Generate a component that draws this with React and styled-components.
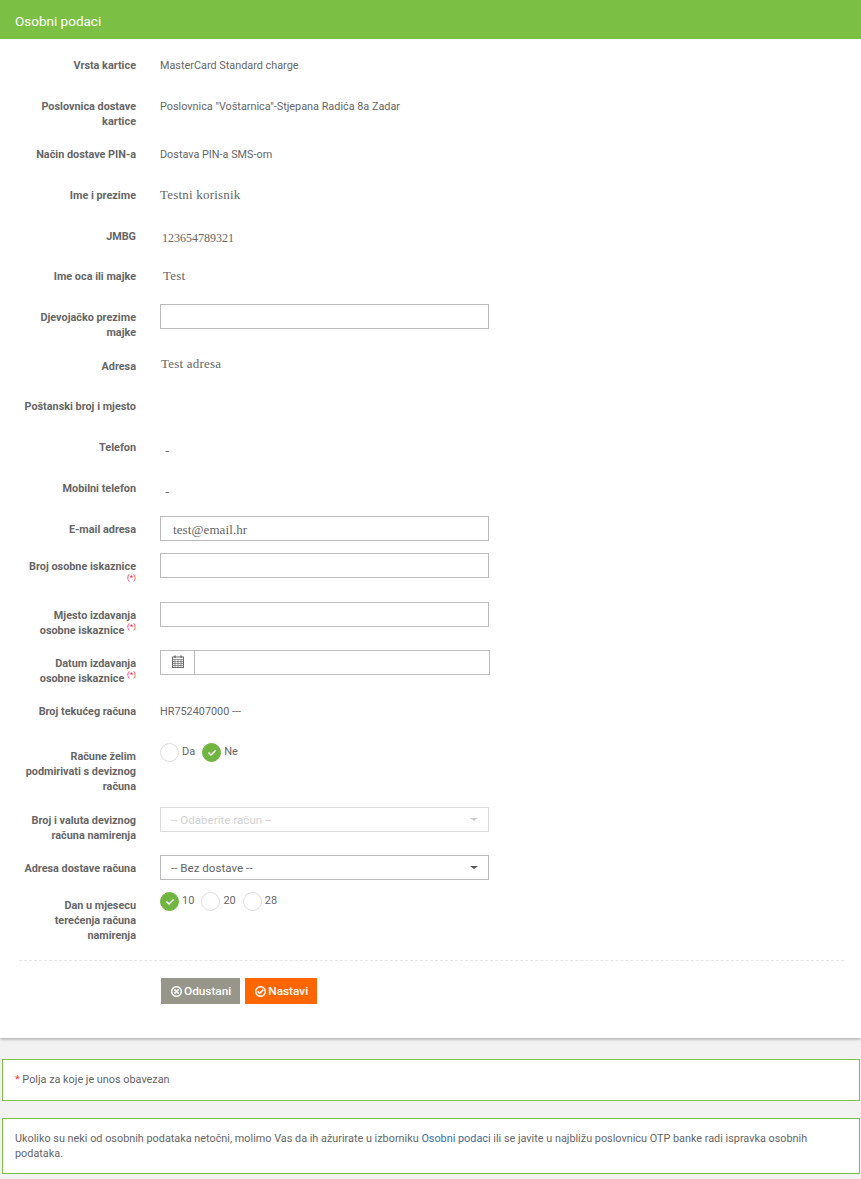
import React from 'react';
import styled, { createGlobalStyle } from 'styled-components';
import { FaCheck, FaRegCheckCircle, FaRegTimesCircle } from 'react-icons/fa';

const GlobalStyle = createGlobalStyle`
  html, body {
    margin: 0;
    padding: 0;
    background: #f2f2f2;
  }
  body {
    font-family: Roboto, "Liberation Sans", sans-serif;
    font-size: 11px;
    color: #666;
  }
`;

const CalendarIcon = () => (
  <svg width="12" height="13" viewBox="0 0 12 13" fill="none" stroke="#6b6b6b" strokeWidth="1">
    <rect x="0.5" y="2" width="11" height="10.5" />
    <path d="M0.5 4.5h11M0.5 6.5h11M0.5 8.5h11M0.5 10.5h11M3 4.5v8M6 4.5v8M9 4.5v8" strokeWidth="0.7" />
    <path d="M3 0.5v2.5M9 0.5v2.5" strokeWidth="1.5" />
  </svg>
);

const Required = () => <Mark>(*)</Mark>;

const App = () => (
  <>
    <GlobalStyle />
    <Panel>
      <Header>Osobni podaci</Header>
      <Body>
        <Row $height={41}>
          <Label>Vrsta kartice</Label>
          <Value>MasterCard Standard charge</Value>
        </Row>
        <Row $height={48}>
          <Label>Poslovnica dostave kartice</Label>
          <Value>Poslovnica "Voštarnica"-Stjepana Radića 8a Zadar</Value>
        </Row>
        <Row $height={41}>
          <Label>Način dostave PIN-a</Label>
          <Value>Dostava PIN-a SMS-om</Value>
        </Row>
        <Row $height={41}>
          <Label>Ime i prezime</Label>
          <SerifValue $top={-1}>Testni korisnik</SerifValue>
        </Row>
        <Row $height={40}>
          <Label>JMBG</Label>
          <SerifValue $left={2} $top={2} $size={12}>123654789321</SerifValue>
        </Row>
        <Row $height={41}>
          <Label>Ime oca ili majke</Label>
          <SerifValue $left={3} $top={-1}>Test</SerifValue>
        </Row>
        <Row $height={49}>
          <Label>Djevojačko prezime majke</Label>
          <Input />
        </Row>
        <Row $height={40}>
          <Label>Adresa</Label>
          <SerifValue $left={1} $top={-3}>Test adresa</SerifValue>
        </Row>
        <Row $height={41}>
          <Label>Poštanski broj i mjesto</Label>
          <div />
        </Row>
        <Row $height={41}>
          <Label>Telefon</Label>
          <SerifValue $left={5} $top={3}>-</SerifValue>
        </Row>
        <Row $height={41}>
          <Label>Mobilni telefon</Label>
          <SerifValue $left={5} $top={3}>-</SerifValue>
        </Row>
        <Row $height={37}>
          <Label>E-mail adresa</Label>
          <Input defaultValue="test@email.hr" />
        </Row>
        <Row $height={49}>
          <Label>Broj osobne iskaznice <Required /></Label>
          <Input />
        </Row>
        <Row $height={48}>
          <Label>Mjesto izdavanja osobne iskaznice <Required /></Label>
          <Input />
        </Row>
        <Row $height={48}>
          <Label>Datum izdavanja osobne iskaznice <Required /></Label>
          <DateField>
            <DateAddon><CalendarIcon /></DateAddon>
            <DateInput />
          </DateField>
        </Row>
        <Row $height={45}>
          <Label>Broj tekućeg računa</Label>
          <Value>HR752407000 ---</Value>
        </Row>
        <Row $height={64}>
          <Label>Račune želim podmirivati s deviznog računa</Label>
          <RadioGroup>
            <RadioItem><Radio /><RadioText>Da</RadioText></RadioItem>
            <RadioItem><Radio $checked><FaCheck /></Radio><RadioText>Ne</RadioText></RadioItem>
          </RadioGroup>
        </Row>
        <Row $height={48}>
          <Label>Broj i valuta deviznog računa namirenja</Label>
          <Select $disabled>-- Odaberite račun --<Caret $disabled /></Select>
        </Row>
        <Row $height={37}>
          <Label>Adresa dostave računa</Label>
          <Select>-- Bez dostave --<Caret /></Select>
        </Row>
        <Row $height={68}>
          <Label>Dan u mjesecu terećenja računa namirenja</Label>
          <RadioGroup>
            <RadioItem><Radio $checked><FaCheck /></Radio><RadioText>10</RadioText></RadioItem>
            <RadioItem><Radio /><RadioText>20</RadioText></RadioItem>
            <RadioItem><Radio /><RadioText>28</RadioText></RadioItem>
          </RadioGroup>
        </Row>
        <Actions>
          <Button $bg="#96968a"><FaRegTimesCircle />Odustani</Button>
          <Button $bg="#ff6600"><FaRegCheckCircle />Nastavi</Button>
        </Actions>
      </Body>
    </Panel>
    <Notes>
      <Note $height={42}><Star>*</Star> Polja za koje je unos obavezan</Note>
      <Note $height={56}>
        Ukoliko su neki od osobnih podataka netočni, molimo Vas da ih ažurirate u izborniku{' '}
        <NoteLink href="#">Osobni podaci</NoteLink> ili se javite u najbližu poslovnicu OTP banke radi ispravka osobnih podataka.
      </Note>
    </Notes>
  </>
);

export default App;

const Panel = styled.div`
  background: #fff;
  height: 1038px;
  box-shadow: 0 1px 3px rgba(0, 0, 0, 0.35);
`;

const Header = styled.div`
  height: 39px;
  padding-left: 15px;
  background: #7bbf45;
  color: #fff;
  font-size: 13.5px;
  font-weight: 400;
  line-height: 43px;
`;

const Body = styled.div`
  padding: 13px 17px 0 19px;
`;

const Row = styled.div`
  display: grid;
  grid-template-columns: 117px 329px;
  column-gap: 24px;
  height: ${(p) => p.$height}px;
  align-items: start;
`;

const Label = styled.div`
  padding-top: 6px;
  color: #666;
  font-size: 10.85px;
  font-weight: 700;
  line-height: 15px;
  text-align: right;
`;

const Mark = styled.sup`
  color: #f0203c;
  font-size: 8px;
  font-weight: 400;
  line-height: 0;
`;

const Value = styled.div`
  padding-top: 6px;
  color: #666;
  font-size: 10.85px;
  line-height: 15px;
  white-space: nowrap;
`;

const SerifValue = styled.div`
  position: relative;
  top: ${(p) => p.$top || 0}px;
  padding-top: 6px;
  padding-left: ${(p) => p.$left || 0}px;
  color: #666;
  font-family: "Liberation Serif", serif;
  font-size: ${(p) => p.$size || 13}px;
  letter-spacing: ${(p) => (p.$size ? 0 : 0.2)}px;
  line-height: 15px;
  white-space: nowrap;
`;

const Input = styled.input`
  box-sizing: border-box;
  display: block;
  width: 329px;
  height: 25px;
  padding: 3px 12px 0;
  border: 1px solid #bbb;
  border-radius: 0;
  outline: none;
  background: #fff;
  color: #666;
  font-family: "Liberation Serif", serif;
  font-size: 13px;
  letter-spacing: 0.1px;
`;

const DateField = styled.div`
  box-sizing: border-box;
  display: flex;
  width: 330px;
  height: 25px;
  border: 1px solid #bbb;
`;

const DateAddon = styled.div`
  display: flex;
  justify-content: center;
  width: 33px;
  padding-top: 4px;
  border-right: 1px solid #bbb;
`;

const DateInput = styled.input`
  flex: 1;
  min-width: 0;
  border: 0;
  outline: none;
  background: transparent;
`;

const RadioGroup = styled.div`
  display: flex;
  gap: 7px;
`;

const RadioItem = styled.label`
  display: flex;
  gap: 3px;
  color: #666;
  font-size: 11px;
  line-height: 15px;
`;

const RadioText = styled.span`
  padding-top: 1px;
`;

const Radio = styled.span`
  box-sizing: border-box;
  display: flex;
  align-items: center;
  justify-content: center;
  width: 19px;
  height: 19px;
  border: 1px solid ${(p) => (p.$checked ? '#6fb53f' : '#ddd')};
  border-radius: 50%;
  background: ${(p) => (p.$checked ? '#6fb53f' : '#fff')};
  color: #fff;
  font-size: 8px;
`;

const Select = styled.div`
  box-sizing: border-box;
  position: relative;
  width: 329px;
  height: 25px;
  padding-left: 10px;
  border: 1px solid ${(p) => (p.$disabled ? '#ddd' : '#bbb')};
  color: ${(p) => (p.$disabled ? '#d2d2d2' : '#666')};
  font-size: 11.6px;
  line-height: 25px;
`;

const Caret = styled.span`
  position: absolute;
  top: 10px;
  right: 10px;
  border-top: 3px solid ${(p) => (p.$disabled ? '#ccc' : '#555')};
  border-right: 4px solid transparent;
  border-left: 4px solid transparent;
`;

const Actions = styled.div`
  display: flex;
  gap: 5px;
  padding: 17px 0 0 142px;
  border-top: 1px dashed #e6e6e6;
`;

const Button = styled.button`
  display: flex;
  align-items: center;
  gap: 2px;
  height: 26px;
  padding: 0 9px 0 10px;
  border: 0;
  border-radius: 0;
  background: ${(p) => p.$bg};
  color: #fff;
  font-family: Roboto, "Liberation Sans", sans-serif;
  font-size: 11.8px;
  font-weight: 500;

  svg {
    font-size: 11px;
    stroke: currentColor;
    stroke-width: 24px;
  }
`;

const Notes = styled.div`
  display: flex;
  flex-direction: column;
  gap: 17px;
  margin: 21px 1px 0 2px;
`;

const Note = styled.div`
  box-sizing: border-box;
  min-height: ${(p) => p.$height}px;
  padding: 12px;
  border: 1px solid #7bbf45;
  background: #fff;
  color: #666;
  font-size: 10.85px;
  line-height: 15px;
`;

const Star = styled.span`
  color: #e33;
`;

const NoteLink = styled.a`
  color: #3a6ea5;
  text-decoration: none;
`;
